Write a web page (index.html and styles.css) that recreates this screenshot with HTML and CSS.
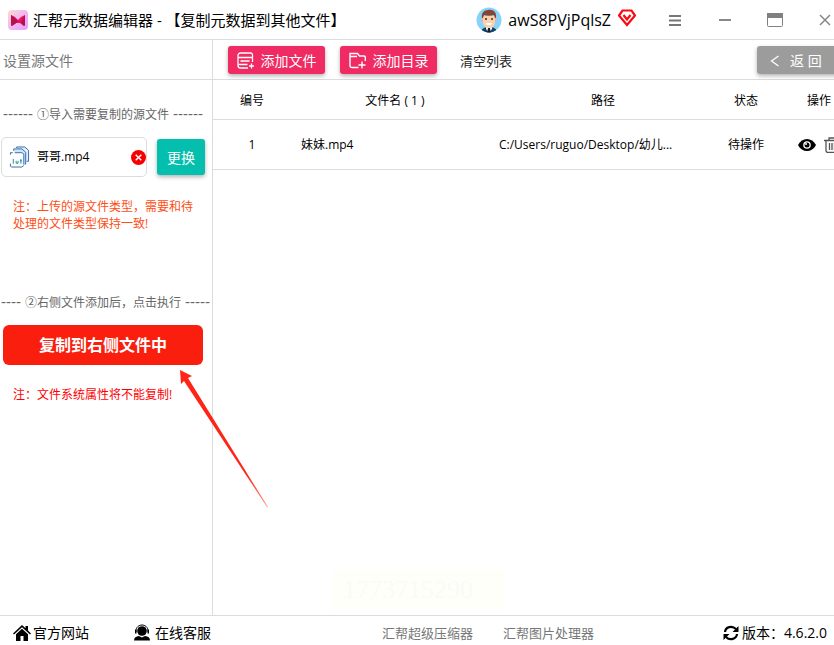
FILE: index.html
```html
<!doctype html>
<html lang="zh-CN">
<head>
  <meta charset="utf-8">
  <title>汇帮元数据编辑器</title>
  <meta name="viewport" content="width=device-width,initial-scale=1">
  <link rel="stylesheet" href="styles.css">
</head>
<body>
  <div class="app">
    <header class="titlebar">
      <svg class="logo" viewBox="0 0 20 20">
        <defs>
          <linearGradient id="logoBg" x1="0" y1="0" x2="1" y2="1">
            <stop offset="0" stop-color="#fbdcd0"/>
            <stop offset=".5" stop-color="#f3b5f3"/>
            <stop offset="1" stop-color="#e69cff"/>
          </linearGradient>
        </defs>
        <rect width="20" height="20" rx="4" fill="url(#logoBg)"/>
        <path d="M3 5l4 2 3 3 3-3 4-2v10l-1 1-4-3H8l-4 3-1-1z" fill="#e8115b"/>
        <path d="M3 5l7 6-3 3-4 2zM17 5l-4 8 3 3 1-1z" fill="#b3124f"/>
      </svg>
      <h1>汇帮元数据编辑器 - 【复制元数据到其他文件】</h1>
      <div class="user">
        <svg class="avatar" viewBox="0 0 26 26">
          <defs><clipPath id="face"><circle cx="13" cy="13" r="12.5"/></clipPath></defs>
          <g clip-path="url(#face)">
            <rect width="26" height="26" fill="#86d3fb"/>
            <path d="M5 26c0-4 3-6 8-6s8 2 8 6z" fill="#17405f"/>
            <path d="M10 19h6v3l-3 4-3-4z" fill="#fff"/>
            <path d="M12 21h2l1 5h-4z" fill="#0c2438"/>
            <circle cx="6.500" cy="13" r="1.500" fill="#f3b58f"/>
            <circle cx="19.500" cy="13" r="1.500" fill="#f3b58f"/>
            <path d="M7 9h12v6c0 4-3 6-6 6s-6-2-6-6z" fill="#fcd0ad"/>
            <path d="M6 11c-1-5 2-8 6-8 5-1 9 2 8 8h-1l-1-3c-3 1-7 1-10 0l-1 3z" fill="#8a4431"/>
            <circle cx="10" cy="12" r="1" fill="#3b2b2b"/>
            <circle cx="16" cy="12" r="1" fill="#3b2b2b"/>
            <path d="M10 16h6c0 3-6 3-6 0z" fill="#fff"/>
          </g>
        </svg>
        <span class="user-name">awS8PVjPqlsZ</span>
        <svg class="vip" viewBox="0 0 18 18" fill="none" stroke="#fa0a10" stroke-width="2.200">
          <path d="M4.500 1.500h9L17 6.500 9 16 1 6.500z"/>
          <path d="M5.500 6L9 10.500 12.500 6"/>
        </svg>
      </div>
      <div class="win-btns">
        <button aria-label="菜单"><svg width="14" height="14" viewBox="0 0 14 14"><path d="M1 3h12M1 7.500h12M1 12h12" stroke="#777" stroke-width="2"/></svg></button>
        <button aria-label="最小化"><svg width="14" height="14" viewBox="0 0 14 14"><path d="M1 7h12" stroke="#888" stroke-width="2"/></svg></button>
        <button aria-label="最大化"><svg width="16" height="14" viewBox="0 0 16 14"><rect x=".5" y=".5" width="15" height="13" rx="1" fill="#fff" stroke="#808080"/><path d="M0 0h16v5H0z" fill="#808080"/></svg></button>
        <button aria-label="关闭"><svg width="12" height="12" viewBox="0 0 12 12"><path d="M1 1l10 10M11 1L1 11" stroke="#888" stroke-width="1.500"/></svg></button>
      </div>
    </header>

    <div class="content">
      <aside class="sidebar">
        <h2>设置源文件</h2>
        <p class="step"><span class="dash">------</span>①导入需要复制的源文件<span class="dash">------</span></p>
        <div class="source">
          <div class="file-box">
            <svg class="file-icon" viewBox="0 0 22 24" fill="none" stroke="#2b6cab">
              <path d="M8 2.500V1.500h8.500l4 3.500v11.500h-2" fill="#e6effb"/>
              <path d="M5 5.500v-2h8.500l4 3.500v12.500h-1" fill="#d5e3f7"/>
              <path d="M1.500 9.500v-2H4M6 7.500h7.500L15.500 9v11M1.500 19v2.500l1 1h11l2-1.500" fill="#fff"/>
              <path d="M4.500 14v5M7.500 16v2.500h2V16M12.500 14v5M11.500 16h2" stroke="#27888f"/>
            </svg>
            <span class="file-name">哥哥.mp4</span>
            <button class="remove" aria-label="移除">
              <svg viewBox="0 0 16 16"><circle cx="8" cy="8" r="8" fill="#f80000"/><path d="M5 5l6 6M11 5l-6 6" stroke="#fff" stroke-width="1.500"/></svg>
            </button>
          </div>
          <button class="btn btn-change">更换</button>
        </div>
        <p class="note note-type">注：上传的源文件类型，需要和待处理的文件类型保持一致!</p>
        <p class="step step-run"><span class="dash">----</span>②右侧文件添加后，点击执行<span class="dash">-----</span></p>
        <button class="btn-copy">复制到右侧文件中</button>
        <p class="note note-attr">注：文件系统属性将不能复制!</p>
      </aside>

      <main class="main">
        <div class="toolbar">
          <button class="btn btn-add">
            <svg width="18" height="18" viewBox="0 0 18 18" fill="none" stroke="#fff" stroke-width="1.300">
              <path d="M15.500 10V3.500c0-1.500-.5-2.500-2-2.500H3.500C2 1 1 2 1 3.500v10C1 15 2 16 3.500 16H11M1 5.500h14.500M3.500 9h9M1 12.500h9.500M14.500 11.500v5M12 14h5"/>
            </svg>
            添加文件
          </button>
          <button class="btn btn-add">
            <svg width="18" height="18" viewBox="0 0 18 18" fill="none" stroke="#fff" stroke-width="1.400">
              <path d="M9.500 15.500H3c-1.300 0-2-.7-2-2V1.500h7.500l2 2.500H15c.8 0 1.300.5 1.300 1.300V9M1 4.500h7M13 9.500v7M9.500 13h7"/>
            </svg>
            添加目录
          </button>
          <button class="btn-clear">清空列表</button>
          <button class="btn btn-back">
            <svg width="10" height="12" viewBox="0 0 10 12" fill="none" stroke="#fff" stroke-width="1.300"><path d="M8.500 1L1.500 6l7 5"/></svg>
            返 回
          </button>
        </div>
        <table class="files">
          <thead>
            <tr>
              <th class="col-no">编号</th>
              <th>文件名 ( 1 )</th>
              <th>路径</th>
              <th class="col-state">状态</th>
              <th class="col-op">操作</th>
            </tr>
          </thead>
          <tbody>
            <tr>
              <td>1</td>
              <td class="name">妹妹.mp4</td>
              <td class="path">C:/Users/ruguo/Desktop/幼儿...</td>
              <td>待操作</td>
              <td>
                <div class="ops">
                  <button aria-label="查看"><svg width="18" height="12" viewBox="0 0 18 12"><path d="M0 6c4-8 14-8 18 0-4 8-14 8-18 0z"/><circle cx="9" cy="6" r="3.800" fill="#fff"/><circle cx="9" cy="6" r="2.500"/><circle cx="8" cy="5" r="1" fill="#fff"/></svg></button>
                  <button aria-label="删除"><svg width="16" height="16" viewBox="0 0 16 16" fill="none" stroke="#555" stroke-width="1.300"><path d="M0 3.500h16M5 3V1h6v2M2 4v10l1 1.300h10l1-1.300V4M5.500 6v7M8 6v7M10.500 6v7"/></svg></button>
                </div>
              </td>
            </tr>
          </tbody>
        </table>
        <div class="stamp">1773715290</div>
      </main>

      <svg class="arrow" viewBox="0 0 90 138">
        <defs>
          <linearGradient id="fade" x1="0" y1="0" x2="0" y2="1">
            <stop offset=".75" stop-color="#ff2415"/>
            <stop offset="1" stop-color="#ff2415" stop-opacity=".5"/>
          </linearGradient>
        </defs>
        <path d="M0 0l12 6-4 2 80 129-1 0L4 11l-3 3z" fill="url(#fade)"/>
      </svg>
    </div>

    <footer class="footer">
      <a href="#" class="site">
        <svg width="18" height="18" viewBox="0 0 18 18"><path d="M9 1L0 9.500l1 1L9 3.300l8 7.200 1-1-3-3V2h-2.500v2.300z"/><path d="M9 4.800L3 10.200V17h4.500v-5h3v5H15v-6.800z"/></svg>
        官方网站
      </a>
      <a href="#" class="service">
        <svg width="18" height="18" viewBox="0 0 18 18"><circle cx="9" cy="7" r="4.800"/><path d="M3 8V7c0-8 12-8 12 0v1" fill="none" stroke="#000" stroke-width="1"/><path d="M2 5.500h1.500v4H2zM14.500 5.500H16v4h-1.500zM1 16.500c0-3 2-4 5-4.500l3 1.500 3-1.500c3 .5 5 1.500 5 4.500z"/></svg>
        在线客服
      </a>
      <nav class="links">
        <a href="#">汇帮超级压缩器</a>
        <a href="#">汇帮图片处理器</a>
      </nav>
      <div class="version">
        <svg width="16" height="16" viewBox="0 0 16 16"><path d="M2 7c.5-5 7-7 11-3M14 9c-.5 5-7 7-11 3" fill="none" stroke="#000" stroke-width="2.200"/><path d="M15.500 1v6h-6zM.5 15V9h6z"/></svg>
        <span>版本：</span><span>4.6.2.0</span>
      </div>
    </footer>
  </div>
</body>
</html>
```
FILE: styles.css
```css
:root {
  --line: #dcdcdc;
  --pink: #f02a62;
  --teal: #04bfad;
  --red: #fa1e0e;
}

* {
  box-sizing: border-box;
  margin: 0;
  padding: 0;
}
body {
  font-family: "Open Sans", "Noto Sans CJK SC", sans-serif;
  font-size: 12px;
  line-height: 16px;
  color: #000;
  background: #fff;
  overflow: hidden;
}
button {
  font: inherit;
  color: inherit;
  background: none;
  border: none;
  cursor: pointer;
}
a {
  color: inherit;
  text-decoration: none;
}
svg { display: block; flex: none; }

/* the window is a little wider than the viewport */
.app {
  width: calc(100% + 19px);
  height: 100vh;
  display: flex;
  flex-direction: column;
}

/* title bar */
.titlebar {
  height: 40px;
  flex: none;
  display: flex;
  align-items: center;
  padding: 0 3px 0 8px;
  border-bottom: 1px solid var(--line);
}
.logo { width: 20px; height: 20px; margin-right: 5px; }
.titlebar h1 {
  font-size: 15px;
  font-weight: 400;
  line-height: 20px;
  white-space: nowrap;
}
.user {
  display: flex;
  align-items: center;
  margin-left: auto;
  margin-right: 14px;
}
.avatar { width: 26px; height: 26px; }
.user-name { font-size: 16px; line-height: 20px; margin: 0 7px 0 6px; }
.vip { width: 18px; height: 18px; margin-bottom: 4px; }
.win-btns { display: flex; }
.win-btns button {
  width: 50px;
  height: 38px;
  display: flex;
  align-items: center;
  justify-content: center;
}

.content {
  flex: 1;
  min-height: 0;
  display: flex;
  position: relative;
}

/* left panel */
.sidebar {
  width: 213px;
  flex: none;
  border-right: 1px solid var(--line);
  overflow: hidden;
}
.sidebar h2 {
  height: 40px;
  padding-left: 3px;
  font-size: 14px;
  font-weight: 400;
  line-height: 41px;
  color: #777;
  border-bottom: 1px solid var(--line);
}
.step {
  width: 206px;
  margin-top: 27px;
  display: flex;
  justify-content: center;
  gap: 4px;
  color: #666;
  white-space: nowrap;
}
.step-run { width: auto; justify-content: flex-start; padding-left: 1px; }
.dash { font: 15px/14px "Liberation Sans", sans-serif; }
.source {
  display: flex;
  align-items: center;
  gap: 10px;
  margin-top: 14px;
  padding-left: 1px;
}
.file-box {
  width: 146px;
  height: 40px;
  display: flex;
  align-items: center;
  padding-left: 7px;
  border: 1px solid var(--line);
  border-radius: 5px;
}
.file-icon { width: 21px; height: 24px; }
.file-name { margin-left: 7px; }
.remove { width: 15px; height: 15px; margin-left: auto; }
.btn {
  display: flex;
  align-items: center;
  justify-content: center;
  border-radius: 3px;
  color: #fff;
  font-size: 14px;
  white-space: nowrap;
  box-shadow: 0 2px 4px rgba(0, 0, 0, .3);
}
.toolbar .btn, .btn-clear { padding-top: 2px; }
.btn-change { width: 48px; height: 36px; padding-top: 2px; background: var(--teal); }
.note { padding: 0 13px; line-height: 17px; }
.note-type { margin: 21px 0 63px; color: #ff4d14; }
.note-attr { color: #f00; margin-top: 21px; }
.btn-copy {
  display: block;
  width: 200px;
  height: 40px;
  margin: 14px 0 0 3px;
  border-radius: 6px;
  background: var(--red);
  color: #fff;
  font-size: 16px;
  font-weight: 700;
}

/* right panel */
.main {
  flex: 1;
  min-width: 0;
  position: relative;
}
.toolbar {
  height: 40px;
  display: flex;
  align-items: center;
  padding-left: 15px;
  border-bottom: 1px solid var(--line);
}
.toolbar .btn { height: 28px; margin-right: 15px; }
.btn-add { width: 97px; gap: 6px; background: var(--pink); }
.btn-clear { margin-left: 8px; font-size: 13px; color: #222; }
.toolbar .btn-back {
  width: 96px;
  margin: 0 0 0 auto;
  padding-left: 13px;
  justify-content: flex-start;
  gap: 10px;
  background: #9c9c9c;
}

.files {
  width: 100%;
  table-layout: fixed;
  border-collapse: separate;
  border-spacing: 0;
}
.files th, .files td {
  font-weight: 400;
  text-align: center;
  white-space: nowrap;
  border-bottom: 1px solid var(--line);
}
.files th { height: 40px; padding-top: 2px; }
.files td { height: 50px; }
.files .name { text-align: left; padding-left: 10px; }
.files .path { text-align: left; }
.col-no, .col-state { width: 78px; }
.col-op { width: 68px; }
.ops {
  display: flex;
  align-items: center;
  gap: 8px;
  padding-left: 13px;
}

.stamp {
  position: absolute;
  left: 118px;
  bottom: 6px;
  width: 173px;
  height: 39px;
  padding-left: 12px;
  background: #fffffa;
  color: #fafaf6;
  font: 26px/39px "Liberation Serif", serif;
}
.arrow {
  position: absolute;
  left: 180px;
  top: 330px;
  width: 90px;
  height: 138px;
}

/* bottom bar */
.footer {
  height: 30px;
  flex: none;
  display: flex;
  align-items: center;
  padding: 4px 26px 0 13px;
  border-top: 1px solid var(--line);
  font-size: 14px;
  white-space: nowrap;
}
.footer a, .version { display: flex; align-items: center; }
.site { gap: 2px; }
.service { gap: 4px; margin-left: 44px; }
.links {
  display: flex;
  gap: 30px;
  margin: 0 auto 0 171px;
  font-size: 13px;
  color: #777;
}
.version svg { margin-right: 3px; }
```
